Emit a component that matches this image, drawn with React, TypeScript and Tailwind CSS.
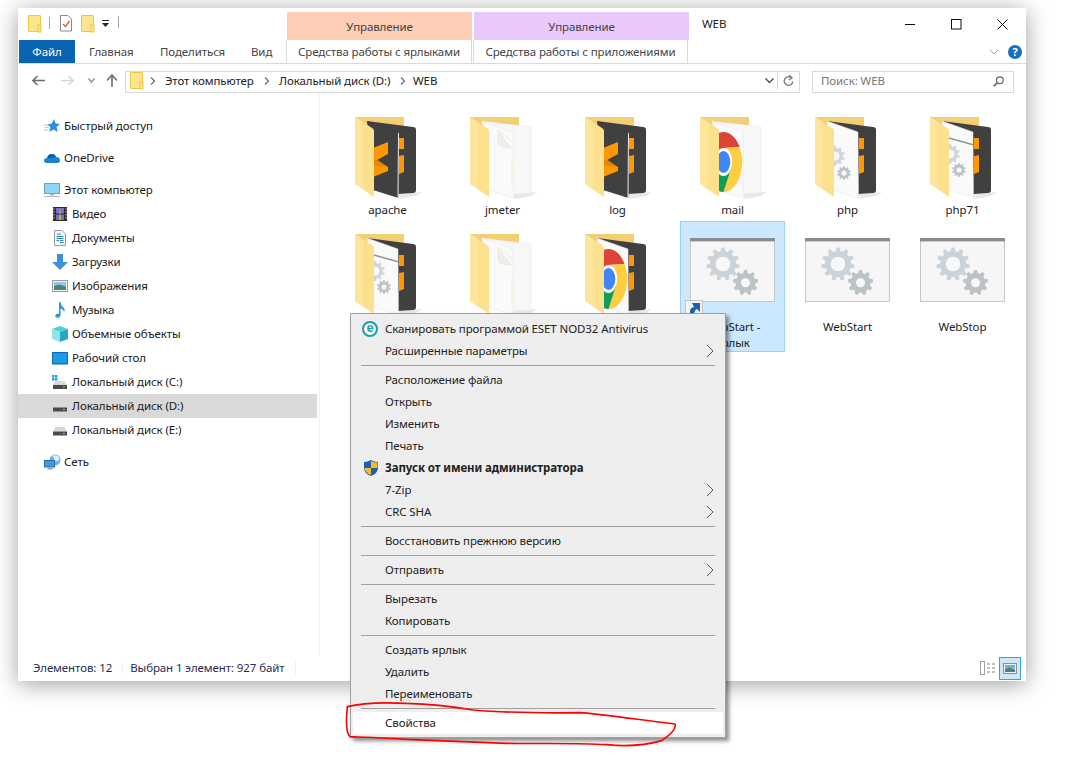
import React from "react";

const gearPath = (cx: number, cy: number, R: number, r: number, teeth: number) => {
  const pts: string[] = [];
  const step = (Math.PI * 2) / teeth;
  for (let i = 0; i < teeth; i++) {
    const a = i * step - Math.PI / 2;
    const seq: [number, number][] = [
      [r, a - step * 0.32],
      [R, a - step * 0.17],
      [R, a + step * 0.17],
      [r, a + step * 0.32],
    ];
    seq.forEach(([rad, an]) => pts.push(`${(cx + rad * Math.cos(an)).toFixed(2)},${(cy + rad * Math.sin(an)).toFixed(2)}`));
  }
  return "M" + pts.join("L") + "Z";
};

const Gear = ({ cx, cy, R, hole, fill, teeth = 10 }: { cx: number; cy: number; R: number; hole: number; fill: string; teeth?: number }) => (
  <g>
    <path d={gearPath(cx, cy, R, R * 0.78, teeth)} fill={fill} />
    <circle cx={cx} cy={cy} r={hole} fill="#f8f8f8" />
  </g>
);

const Chrome = ({ x, y }: { x: number; y: number }) => (
  <g transform={`translate(${x} ${y}) scale(0.62 1)`}>
    <path d="M0,-14 L26,-15 A30 30 0 0 0 -26,-15 L-12,7 Z" fill="#db4437" />
    <path d="M0,-14 L26,-15 A30 30 0 0 1 0,30 L12,7 Z" fill="#ffcd40" />
    <path d="M0,30 A30 30 0 0 1 -26,-15 L-12,7 L12,7 Z" fill="#0f9d58" />
    <circle r="14" fill="#fff" />
    <circle r="11" fill="#4285f4" />
  </g>
);

type Front = "dark" | "blank" | "chrome" | "gear" | "window";
const Folder = ({ front, back }: { front: Front; back: "dark" | "blank" }) => (
  <svg width="68" height="86" viewBox="0 0 68 86">
    <path d="M1,1 H50 V14 H1 Z" fill="#f2cf75" />
    <path d="M44,78 L68,76 L62,80 L46,83 Z" fill="#e8e8e8" />
    {back === "dark" ? (
      <g>
        <path d="M13,5 L59,11 Q62,11 62,14 L62,74 Q62,77 59,77 L44,78 Z" fill="#404040" />
        <path d="M45,22 H50 V33 H45 Z M45,40 L50,39 V56 L45,58 Z" fill="#ff9800" />
      </g>
    ) : (
      <path d="M13,5 L62,11 L62,77 L44,78 Z" fill="#f7f7f7" stroke="#e6e6e6" strokeWidth="0.5" />
    )}
    {front === "dark" ? (
      <g>
        <path d="M13,5 L44,16 Q45,17 45,18 L44.5,82 L19,74 Z" fill="#404040" />
        <path d="M44,16 L45,18 L44.5,82 L43.5,82 Z" fill="#e8e8e8" />
        <path d="M19,32 L34,26 V38 L23,44 L34,51 V55 L19,61 Z" fill="#ff9800" />
        <path d="M19,44 L24,44 L34,51 L19,49 Z" fill="#d07c00" opacity="0.6" />
      </g>
    ) : (
      <g>
        <path d="M13,5 L44,16 L44.5,82 L19,74 Z" fill="#fafafa" stroke="#e4e4e4" strokeWidth="0.5" />
        {front === "blank" && (
          <path d="M30,14 L43,26 M29,14 L29,26 Q29,30 35,31 L43,32 M43,45 V70" stroke="#f3e3b0" strokeWidth="0.7" fill="#eee" />
        )}
        {front === "gear" && (
          <g>
            <Gear cx={21} cy={40} R={10} hole={4.5} fill="#d0d6da" />
            <Gear cx={30} cy={57} R={7} hole={2.6} fill="#bcc4c8" />
          </g>
        )}
        {front === "window" && (
          <g>
            <path d="M19,21 L44,28 V29.5 L19,22.5 Z" fill="#8f8f8f" />
            <Gear cx={21} cy={38} R={10} hole={4.5} fill="#d0d6da" />
            <Gear cx={30} cy={54} R={7} hole={2.6} fill="#bcc4c8" />
          </g>
        )}
        {front === "chrome" && <Chrome x={24.5} y={46} />}
      </g>
    )}
    <path d="M1,1 L18,12 Q20,13 20,15 L20,81 L1,68 Z" fill="#fbe08e" />
    <path d="M1,1 L9,6 V73 L1,68 Z" fill="#fde59e" />
  </svg>
);

const WinIcon = () => (
  <svg width="85" height="64" viewBox="0 0 85 64" className="block">
    <rect x="0.5" y="0.5" width="84" height="63" fill="#f6f6f6" stroke="#c6c6c6" />
    <rect x="0" y="0" width="85" height="3.4" fill="#8c8c8c" />
    <Gear cx={33} cy={26} R={16.7} hole={7.3} fill="#ccd3d8" teeth={11} />
    <Gear cx={55.5} cy={44.7} R={12.7} hole={4.5} fill="#bcc3c7" teeth={9} />
  </svg>
);

const SmallFolder = () => (
  <svg width="14" height="18" viewBox="0 0 14 18">
    <rect x="0.5" y="0.5" width="12" height="16" rx="0.5" fill="#fde48f" stroke="#eec73f" />
    <rect x="10" y="10" width="3" height="7" fill="#fde48f" stroke="#eec73f" />
  </svg>
);

const icons: Record<string, React.ReactNode> = {
  star: (
    <svg width="16" height="16" viewBox="0 0 16 16">
      <path d="M10,1 L11.6,5.6 L16,6 L12.6,9 L13.6,14 L9.5,11.4 L5.4,14 L6.4,9 L3.4,6.4 L7.8,5.6 Z" fill="#2a8fe0" />
      <path d="M0,7 H4 M1,9.5 H4.5 M0,12 H4" stroke="#9cc9ef" strokeWidth="1" />
    </svg>
  ),
  cloud: (
    <svg width="16" height="16" viewBox="0 0 16 16">
      <path d="M3,13 Q0,13 0,10.5 Q0,8 3,8 Q4,4 8,4 Q11,4 12,7 Q16,7 16,10.5 Q16,13 13,13 Z" fill="#1a82d8" />
      <path d="M3,8 Q4,4 8,4 Q11,4 12,7 Q9,6.5 7,8.5 Q4,7.5 3,8 Z" fill="#0f5fae" />
    </svg>
  ),
  pc: (
    <svg width="16" height="16" viewBox="0 0 16 16">
      <rect x="0.5" y="1.5" width="15" height="10" fill="#8ed4f6" stroke="#7f9fb5" />
      <path d="M6,12 H10 V13.5 H6 Z" fill="#a8b4bc" />
      <rect x="0" y="14" width="16" height="1" fill="#b4bcc2" />
    </svg>
  ),
  video: (
    <svg width="16" height="16" viewBox="0 0 16 16">
      <rect x="1" y="1" width="14" height="14" fill="#2d2d2d" />
      <rect x="4" y="2" width="8" height="5.5" fill="#7b6fd0" />
      <rect x="4" y="8.5" width="8" height="5.5" fill="#5d78c8" />
      <path d="M8,2 L9,7.5 H7 Z M7,9 H9 V14 H7 Z" fill="#e0b020" />
      <path d="M2,2 V14 M14,2 V14" stroke="#bbb" strokeWidth="1" strokeDasharray="1.5 1.5" />
    </svg>
  ),
  docs: (
    <svg width="16" height="16" viewBox="0 0 16 16">
      <path d="M2.5,0.5 H10 L13.5,4 V15.5 H2.5 Z" fill="#f6f6f6" stroke="#9a9a9a" />
      <path d="M5,4 H9 M4.5,6.5 H11.5 M4.5,8.5 H11.5 M8,10.5 H11.5 M8,12.5 H11.5 M4.5,10.5 H7" stroke="#2f86c8" strokeWidth="1" />
    </svg>
  ),
  down: (
    <svg width="16" height="17" viewBox="0 0 16 17">
      <path d="M5,0 H11 V8 H16 L8,16 L0,8 H5 Z" fill="#3d8fdc" />
    </svg>
  ),
  images: (
    <svg width="16" height="16" viewBox="0 0 16 16">
      <rect x="0.5" y="2.5" width="15" height="11" fill="#f4f4f4" stroke="#9a9a9a" />
      <rect x="2" y="4" width="12" height="4" fill="#8ec8ee" />
      <path d="M2,8 L7,6.5 L14,8.5 V12 H2 Z" fill="#4f8470" />
    </svg>
  ),
  music: (
    <svg width="16" height="16" viewBox="0 0 16 16">
      <path d="M7,0 H8.4 Q9,4 12,6 Q13.5,8 12,10.5 Q12,7.5 8.5,6.5 V13 Q8.5,15.5 5.5,15.7 Q3,15.7 3.3,13.6 Q3.7,11.5 7,11.5 Z" fill="#1e9be8" />
    </svg>
  ),
  cube: (
    <svg width="16" height="16" viewBox="0 0 16 16">
      <path d="M8,0 L16,3 L8,6 L0,3 Z" fill="#4fd0d8" />
      <path d="M0,3 L8,6 V16 L0,13 Z" fill="#8fe4e6" />
      <path d="M16,3 L8,6 V16 L16,13 Z" fill="#2aa6c0" />
    </svg>
  ),
  desktop: (
    <svg width="16" height="16" viewBox="0 0 16 16">
      <rect x="0.5" y="2.5" width="15" height="11" fill="#1e9ae6" stroke="#1069b0" />
      <rect x="0" y="13" width="16" height="1.5" fill="#0f6cb5" />
    </svg>
  ),
  diskC: (
    <svg width="16" height="16" viewBox="0 0 16 16">
      <path d="M0,1 H2.4 V3.4 H0 Z M3,1 H5.4 V3.4 H3 Z M0,4 H2.4 V6.4 H0 Z M3,4 H5.4 V6.4 H3 Z" fill="#1a9ee8" />
      <path d="M3,7 H12 L15,11 H1 Z" fill="#d8d8d8" />
      <rect x="1" y="11" width="14" height="4" fill="#4a4a4a" />
      <rect x="11" y="12.5" width="2" height="1" fill="#5fe05f" />
    </svg>
  ),
  disk: (
    <svg width="16" height="16" viewBox="0 0 16 16">
      <path d="M3.5,5 H12.5 L15,9.5 H1 Z" fill="#d8d8d8" />
      <rect x="1" y="9.5" width="14" height="4" fill="#4a4a4a" />
      <rect x="11" y="11" width="2" height="1" fill="#5fe05f" />
    </svg>
  ),
  net: (
    <svg width="17" height="16" viewBox="0 0 17 16">
      <circle cx="11" cy="6" r="5.5" fill="#6fb2e0" />
      <path d="M8,2 Q11,4 10,7 Q13,8 15,6 L15,3 Q12,0 8,2 Z" fill="#e2eef6" />
      <rect x="0.5" y="6.5" width="10" height="6.5" fill="#3e9be0" stroke="#2a6ea6" />
      <rect x="3.5" y="14" width="5" height="1.4" fill="#8a9aa6" />
    </svg>
  ),
};

const navGroups: { icon: string; label: string; sub?: boolean; active?: boolean }[][] = [
  [{ icon: "star", label: "Быстрый доступ" }],
  [{ icon: "cloud", label: "OneDrive" }],
  [
    { icon: "pc", label: "Этот компьютер" },
    { icon: "video", label: "Видео", sub: true },
    { icon: "docs", label: "Документы", sub: true },
    { icon: "down", label: "Загрузки", sub: true },
    { icon: "images", label: "Изображения", sub: true },
    { icon: "music", label: "Музыка", sub: true },
    { icon: "cube", label: "Объемные объекты", sub: true },
    { icon: "desktop", label: "Рабочий стол", sub: true },
    { icon: "diskC", label: "Локальный диск (C:)", sub: true },
    { icon: "disk", label: "Локальный диск (D:)", sub: true, active: true },
    { icon: "disk", label: "Локальный диск (E:)", sub: true },
  ],
  [{ icon: "net", label: "Сеть" }],
];

const tiles: { label: string; front?: Front; back?: "dark" | "blank" }[] = [
  { label: "apache", front: "dark", back: "dark" },
  { label: "jmeter", front: "blank", back: "blank" },
  { label: "log", front: "dark", back: "dark" },
  { label: "mail", front: "chrome", back: "blank" },
  { label: "php", front: "gear", back: "dark" },
  { label: "php71", front: "window", back: "dark" },
  { label: "", front: "window", back: "dark" },
  { label: "", front: "blank", back: "blank" },
  { label: "", front: "chrome", back: "dark" },
  { label: "WebStart - ярлык" },
  { label: "WebStart" },
  { label: "WebStop" },
];

type MenuRow = { t: string; arrow?: boolean; icon?: "eset" | "shield"; bold?: boolean; hot?: boolean; tall?: boolean } | "sep";
const menu: MenuRow[] = [
  { t: "Сканировать программой ESET NOD32 Antivirus", icon: "eset", tall: true },
  { t: "Расширенные параметры", arrow: true },
  "sep",
  { t: "Расположение файла" },
  { t: "Открыть" },
  { t: "Изменить" },
  { t: "Печать" },
  { t: "Запуск от имени администратора", icon: "shield", bold: true },
  { t: "7-Zip", arrow: true },
  { t: "CRC SHA", arrow: true },
  "sep",
  { t: "Восстановить прежнюю версию" },
  "sep",
  { t: "Отправить", arrow: true },
  "sep",
  { t: "Вырезать" },
  { t: "Копировать" },
  "sep",
  { t: "Создать ярлык" },
  { t: "Удалить" },
  { t: "Переименовать" },
  "sep",
  { t: "Свойства", hot: true },
];

const Crumb = () => (
  <svg width="6" height="8" viewBox="0 0 6 8" className="shrink-0">
    <path d="M1,0.5 L4.5,4 L1,7.5" fill="none" stroke="#777" strokeWidth="1.4" />
  </svg>
);

export default function App() {
  return (
    <div className="relative h-[762px] w-[1080px] overflow-hidden bg-white pl-[18px] pt-[8px] font-['Noto_Sans',sans-serif] text-[11.5px] leading-[16px] tracking-[-0.1px] text-[#1a1a1a]">
      <div className="flex h-[673px] w-[1008px] flex-col bg-white shadow-[0_3px_22px_rgba(0,0,0,0.38)]">
        {/* title row */}
        <div className="flex h-[32px] items-end">
          <div className="flex h-full w-[269px] items-start pl-[10px] pt-[7px]">
            <SmallFolder />
            <div className="ml-[7px] mt-[2px] h-[12px] w-px bg-[#a8a8a8]" />
            <svg width="14" height="17" viewBox="0 0 14 17" className="ml-[10px]">
              <path d="M0.5,0.5 H8 L11.5,4 V16 H0.5 Z" fill="#fff" stroke="#8a8a8a" />
              <path d="M3,9 L5.5,11.5 L9.5,6" fill="none" stroke="#e8522a" strokeWidth="1.3" />
            </svg>
            <div className="ml-[7px]"><SmallFolder /></div>
            <svg width="8" height="8" viewBox="0 0 8 8" className="ml-[7px] mt-[5px]">
              <path d="M0,0 H7 V1 H0 Z M0,3 H7 L3.5,7 Z" fill="#222" />
            </svg>
            <div className="ml-[8px] mt-[1px] h-[12px] w-px bg-[#a8a8a8]" />
          </div>
          <div className="flex h-[28px] w-[185px] items-center justify-center bg-[#fdcdb5] pt-[2px] text-[#444]">Управление</div>
          <div className="ml-[2px] flex h-[28px] w-[215px] items-center justify-center bg-[#e9c9fb] pt-[2px] text-[#444]">Управление</div>
          <div className="ml-[13px] self-start pt-[8px] text-[#222]">WEB</div>
          <div className="ml-auto flex items-start self-start pt-[11px]">
            <svg width="11" height="11" viewBox="0 0 11 11"><path d="M0,5.5 H10" stroke="#111" /></svg>
            <svg width="11" height="11" viewBox="0 0 11 11" className="ml-[35px]"><rect x="0.5" y="0.5" width="9.5" height="9.5" fill="none" stroke="#111" /></svg>
            <svg width="11" height="11" viewBox="0 0 11 11" className="ml-[35px] mr-[18px]"><path d="M0.5,0.5 L10.5,10.5 M10.5,0.5 L0.5,10.5" stroke="#111" /></svg>
          </div>
        </div>
        {/* tabs */}
        <div className="flex h-[24px] items-stretch border-b border-[#dadada] text-[#444]">
          <div className="ml-px flex w-[56px] items-center justify-center bg-[#0a64b4] text-white">Файл</div>
          <div className="flex w-[71px] items-center pl-[14px]">Главная</div>
          <div className="flex w-[91px] items-center pl-[14px]">Поделиться</div>
          <div className="flex w-[49px] items-center pl-[14px]">Вид</div>
          <div className="flex w-[186px] items-center justify-center border-x border-[#dadada] whitespace-nowrap">Средства работы с ярлыками</div>
          <div className="ml-px flex w-[215px] items-center justify-center border-x border-[#dadada] whitespace-nowrap">Средства работы с приложениями</div>
          <div className="ml-auto flex items-center pr-[4px]">
            <svg width="10" height="6" viewBox="0 0 10 6"><path d="M0.5,0.5 L5,5 L9.5,0.5" fill="none" stroke="#a8a8a8" /></svg>
            <div className="ml-[9px] flex h-[14px] w-[14px] items-center justify-center rounded-full bg-[#1a6fc4] text-[11px] font-bold text-white">?</div>
          </div>
        </div>
        {/* address row */}
        <div className="flex h-[29px] items-end">
          <div className="flex h-[22px] w-[107px] items-center pb-[3px] pl-[14px]">
            <svg width="13" height="11" viewBox="0 0 13 11"><path d="M13,5.5 H1.5 M5.5,1 L1,5.5 L5.5,10" fill="none" stroke="#6e6e6e" strokeWidth="1.6" /></svg>
            <svg width="13" height="11" viewBox="0 0 13 11" className="ml-[16px]"><path d="M0,5.5 H11.5 M7.5,1 L12,5.5 L7.5,10" fill="none" stroke="#d8d8d8" strokeWidth="1.6" /></svg>
            <svg width="7" height="5" viewBox="0 0 7 5" className="ml-[14px]"><path d="M0.5,0.5 L3.5,4 L6.5,0.5" fill="none" stroke="#8a8a8a" strokeWidth="1.2" /></svg>
            <svg width="12" height="13" viewBox="0 0 12 13" className="ml-[11px]"><path d="M6,13 V1.5 M1,6.5 L6,1 L11,6.5" fill="none" stroke="#6e6e6e" strokeWidth="1.6" /></svg>
          </div>
          <div className="flex h-[22px] w-[675px] items-center border border-[#d9d9d9] pb-[2px] pl-[4px]">
            <SmallFolder />
            <div className="ml-[6px]"><Crumb /></div>
            <span className="ml-[9px] w-[90px] whitespace-nowrap text-[#222]">Этот компьютер</span>
            <div className="ml-[9px]"><Crumb /></div>
            <span className="ml-[9px] w-[115px] whitespace-nowrap text-[#222]">Локальный диск (D:)</span>
            <div className="ml-[6px]"><Crumb /></div>
            <span className="ml-[7px] text-[#222]">WEB</span>
            <svg width="9" height="6" viewBox="0 0 9 6" className="ml-auto"><path d="M0.5,0.5 L4.5,4.5 L8.5,0.5" fill="none" stroke="#555" strokeWidth="1.5" /></svg>
            <div className="ml-[3px] h-full w-px bg-[#d9d9d9]" />
            <svg width="11" height="12" viewBox="0 0 11 12" className="mx-[5px]"><path d="M8.5,3 A4.3,4.3 0 1 0 9.8,6.5 M6,0 L9,3 L6,5" fill="none" stroke="#777" strokeWidth="1.3" /></svg>
          </div>
          <div className="ml-[12px] flex h-[22px] w-[202px] items-center border border-[#d9d9d9] pb-[2px] pl-[8px] pr-[9px] text-[#777]">
            <span>Поиск: WEB</span>
            <svg width="11" height="11" viewBox="0 0 11 11" className="ml-auto"><circle cx="6.8" cy="4.2" r="3.4" fill="none" stroke="#666" strokeWidth="1.2" /><path d="M4.2,6.8 L0.8,10.2" stroke="#666" strokeWidth="1.8" /></svg>
          </div>
        </div>
        {/* body */}
        <div className="flex min-h-0 flex-1">
          <nav className="flex w-[299px] shrink-0 flex-col gap-[8px] pt-[21px]">
            {navGroups.map((g, i) => (
              <div key={i} className="flex flex-col">
                {g.map((n) => (
                  <div key={n.label} className={`flex h-[24px] items-center ${n.sub ? "pl-[34px]" : "pl-[26px]"} ${n.active ? "bg-[#d9d9d9]" : ""}`}>
                    <span className="flex w-[20px] shrink-0 items-center">{icons[n.icon]}</span>
                    <span className="text-[#1a1a1a]">{n.label}</span>
                  </div>
                ))}
              </div>
            ))}
          </nav>
          <main className="ml-[2px] flex-1 border-l border-[#f0f0f0] pl-[15px] pt-[11px]">
            <div className="grid auto-rows-[117px] grid-cols-[repeat(6,105px)] gap-x-[10px]">
              {tiles.map((t, i) => (
                <div
                  key={i}
                  className={`relative flex flex-col items-center border pt-[11px] text-center ${i === 9 ? "h-[131px] border-[#99d1ff] bg-[#cce8ff]" : "h-[115px] border-transparent"}`}
                >
                  <div className="flex h-[86px] w-full justify-center">
                    {t.front && t.back ? (
                      <Folder front={t.front} back={t.back} />
                    ) : (
                      <div className="pt-[5px]"><WinIcon /></div>
                    )}
                  </div>
                  <span className="px-[8px]">{t.label}</span>
                  {i === 9 && (
                    <svg width="18" height="18" viewBox="0 0 18 18" className="absolute left-[4px] top-[78px]">
                      <rect x="0.5" y="0.5" width="17" height="17" fill="#f4f4f4" stroke="#c4c4c4" />
                      <path d="M5,16 V11 Q5,8 9,7 L7,3 H15 V12 L12,9 Q9,10 9,16 Z" fill="#1c5fa8" />
                    </svg>
                  )}
                </div>
              ))}
            </div>
          </main>
        </div>
        {/* status bar */}
        <div className="flex h-[26px] items-center pl-[15px] text-[#2b2b50]">
          <span>Элементов: 12</span>
          <div className="ml-[10px] h-[12px] w-px bg-[#eeeeee]" />
          <span className="ml-[7px]">Выбран 1 элемент: 927 байт</span>
          <div className="ml-[10px] h-[12px] w-px bg-[#eeeeee]" />
          <div className="ml-auto mr-[5px] flex items-center">
            <svg width="16" height="14" viewBox="0 0 16 14">
              <rect x="0.5" y="0.5" width="4" height="13" fill="#fff" stroke="#a0a0a0" />
              <path d="M7,3 H10 M12,3 H15 M7,7 H10 M12,7 H15 M7,11 H10 M12,11 H15" stroke="#808080" />
            </svg>
            <div className="ml-[3px] flex h-[23px] w-[22px] items-center justify-center border border-[#31a5dc] bg-[#cde8f6]">
              <svg width="14" height="11" viewBox="0 0 14 11">
                <rect x="0.5" y="0.5" width="13" height="10" fill="#f4f4f4" stroke="#909090" />
                <rect x="2" y="2" width="10" height="3.5" fill="#6fb0e8" />
                <path d="M2,6 L6,4.5 L12,6.5 V9 H2 Z" fill="#4f8470" />
              </svg>
            </div>
          </div>
        </div>
      </div>

      {/* context menu */}
      <div className="absolute left-[350px] top-[313px] flex w-[376px] flex-col border border-[#a0a0a0] bg-[#eeeeee] pb-[3px] pl-[2px] pr-[2px] pt-[3px] text-[#222] shadow-[3px_3px_4px_rgba(0,0,0,0.45)]">
        {menu.map((m, i) =>
          m === "sep" ? (
            <div key={i} className="flex h-[7px] items-center pl-[8px] pr-[8px]"><div className="h-px w-full bg-[#a0a0a0]" /></div>
          ) : (
            <div key={i} className={`flex items-center ${m.tall ? "h-[23px]" : "h-[22px]"} ${m.hot ? "bg-white" : ""}`}>
              <span className="flex w-[32px] shrink-0 items-center justify-end pr-[7px]">
                {m.icon === "eset" && (
                  <span className="flex h-[16px] w-[16px] items-center justify-center rounded-full border-2 border-[#17a0a8] bg-white pb-[2px] text-[12px] font-bold leading-none text-[#17a0a8]">e</span>
                )}
                {m.icon === "shield" && (
                  <svg width="14" height="16" viewBox="0 0 14 16">
                    <path d="M7,0 Q10,2 14,2 V8 Q14,13 7,16 Q0,13 0,8 V2 Q4,2 7,0 Z" fill="#1d5fb4" />
                    <path d="M7,1 V8 H13.5 V2.5 Q10,2.5 7,1 Z M7,8 V15 Q1,12.5 0.6,8 Z" fill="#f6bd1f" />
                  </svg>
                )}
              </span>
              <span className={m.bold ? "font-bold" : ""}>{m.t}</span>
              {m.arrow && (
                <svg width="8" height="14" viewBox="0 0 8 14" className="ml-auto mr-[9px]">
                  <path d="M1,1 L7,7 L1,13" fill="none" stroke="#4a5a78" strokeWidth="1" />
                </svg>
              )}
            </div>
          )
        )}
      </div>

      {/* red annotation */}
      <svg width="400" height="232" viewBox="0 0 1200 696" className="absolute left-[340px] top-[530px]">
        <path
          d="M22,530 C60,520 120,516 200,520 C280,522 340,530 400,540 C470,546 550,550 720,548 C800,554 900,570 1005,582 C1010,595 990,615 965,632 C920,645 860,650 800,644 C700,638 600,642 500,640 C400,636 300,632 200,628 C140,624 80,622 30,620 C20,612 16,590 22,530 Z"
          fill="none"
          stroke="#ff0000"
          strokeWidth="5"
          strokeLinejoin="round"
        />
      </svg>
    </div>
  );
}
